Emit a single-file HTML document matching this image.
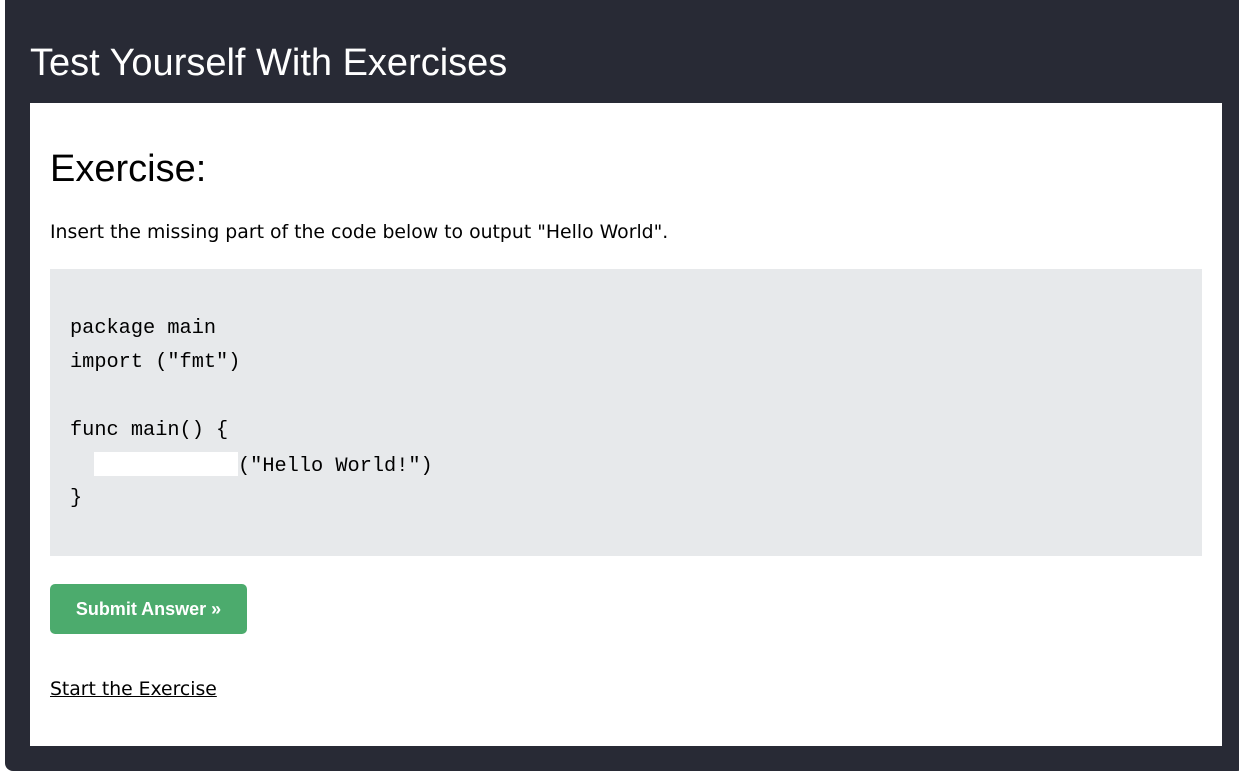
<!DOCTYPE html>
<html><head><meta charset="utf-8"><style>
html,body{margin:0;padding:0;background:#fff;width:1239px;height:775px;overflow:hidden}
.outer{position:absolute;left:5px;top:0;width:1240px;height:771px;background:#282a35;border-radius:0 0 8px 8px}
h2{position:absolute;left:25px;top:40px;margin:0;color:#fff;font:38px "Liberation Sans",sans-serif;line-height:46px}
.panel{position:absolute;left:25px;top:103px;width:1192px;height:643px;background:#fff}
h3{position:absolute;left:20px;top:44px;margin:0;font:38px "Liberation Sans",sans-serif;line-height:44px;color:#000}
p{position:absolute;left:20px;top:118px;margin:0;font:18.85px "DejaVu Sans",sans-serif;color:#000;line-height:24px}
.code{position:absolute;left:20px;top:166px;width:1152px;height:287px;background:#e7e9eb;font:20.3px "Liberation Mono",monospace;color:#000}
.code div{position:absolute;left:20px;white-space:pre}
.inp{display:inline-block;width:144px;height:24px;background:#fff;vertical-align:-5px;margin-left:24px}
.btn{position:absolute;left:20px;top:481px;width:197px;height:50px;background:#4cab6d;border-radius:5px;color:#fff;font:bold 18px "Liberation Sans",sans-serif;text-align:center;line-height:50px}
a{position:absolute;left:20px;top:576px;font:18.8px "DejaVu Sans",sans-serif;color:#000;text-decoration:underline}
</style></head><body>
<div class="outer">
<h2>Test Yourself With Exercises</h2>
<div class="panel">
<h3>Exercise:</h3>
<p>Insert the missing part of the code below to output "Hello World".</p>
<div class="code">
<div style="top:48px">package main</div>
<div style="top:82px">import ("fmt")</div>
<div style="top:150px">func main() {</div>
<div style="top:183px"><span class="inp"></span>("Hello World!")</div>
<div style="top:218px">}</div>
</div>
<div class="btn">Submit Answer »</div>
<a>Start the Exercise</a>
</div>
</div>
</body></html>
